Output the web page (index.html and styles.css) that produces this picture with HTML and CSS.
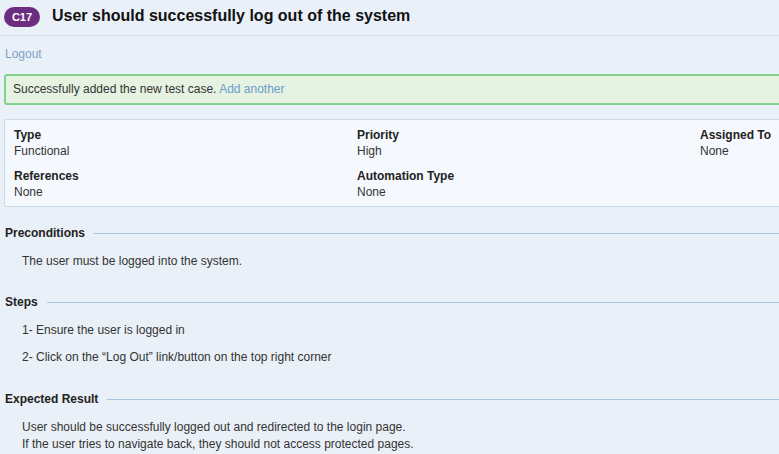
FILE: index.html
```html
<!DOCTYPE html>
<html>
<head>
<meta charset="utf-8">
<link rel="stylesheet" href="styles.css">
</head>
<body>
<div class="page">
  <header class="header">
    <span class="badge">C17</span>
    <h1 class="title">User should successfully log out of the system</h1>
  </header>
  <a class="logout" href="#">Logout</a>
  <div class="alert">Successfully added the new test case. <a href="#">Add another</a></div>
  <div class="info">
    <div class="field"><div class="label">Type</div><div class="value">Functional</div></div>
    <div class="field"><div class="label">Priority</div><div class="value">High</div></div>
    <div class="field"><div class="label">Assigned To</div><div class="value">None</div></div>
    <div class="field"><div class="label">References</div><div class="value">None</div></div>
    <div class="field"><div class="label">Automation Type</div><div class="value">None</div></div>
  </div>
  <section class="section first">
    <h2 class="sec-head"><span>Preconditions</span></h2>
    <div class="sec-body pre"><p>The user must be logged into the system.</p></div>
  </section>
  <section class="section">
    <h2 class="sec-head"><span>Steps</span></h2>
    <div class="sec-body steps">
      <p>1- Ensure the user is logged in</p>
      <p>2- Click on the “Log Out” link/button on the top right corner</p>
    </div>
  </section>
  <section class="section last">
    <h2 class="sec-head"><span>Expected Result</span></h2>
    <div class="sec-body result">
      <p>User should be successfully logged out and redirected to the login page.</p>
      <p>If the user tries to navigate back, they should not access protected pages.</p>
    </div>
  </section>
</div>
</body>
</html>
```

FILE: styles.css
```css
html, body {
  margin: 0;
  padding: 0;
  background: #eaf0f7;
  overflow: hidden;
}
body {
  font-family: "Liberation Sans", Arial, sans-serif;
  font-size: 12px;
  color: #333;
}
.page {
  width: 1060px;
}
.header {
  display: flex;
  align-items: center;
  height: 36px;
  border-bottom: 1px solid #d3dfeb;
  padding-left: 4px;
  box-sizing: border-box;
}
.badge {
  display: inline-flex;
  align-items: center;
  justify-content: center;
  width: 36px;
  height: 20px;
  border-radius: 10px;
  background: #6c2c80;
  color: #fff;
  font-weight: bold;
  font-size: 11px;
  margin-top: -2px;
}
.title {
  margin: -4px 0 0 12px;
  font-size: 16px;
  font-weight: bold;
  color: #111;
}
.logout {
  display: block;
  margin: 11px 0 0 5px;
  color: #7ba4c9;
  text-decoration: none;
  line-height: 14px;
}
.alert {
  margin: 13px 0 0 4px;
  height: 31px;
  box-sizing: border-box;
  background: #e6f2e2;
  border: 2px solid #82d18d;
  border-radius: 3px;
  padding: 6px 0 0 7px;
  line-height: 14px;
  color: #333;
}
.alert a {
  color: #6b9fc9;
  text-decoration: none;
}
.info {
  margin: 14px 0 0 4px;
  background: #f5f9fd;
  border: 1px solid #c8d9e9;
  border-radius: 2px;
  padding: 7px 9px 6px 9px;
  display: grid;
  grid-template-columns: 343px 343px 343px;
  row-gap: 9px;
}
.label {
  font-weight: bold;
  color: #222;
  line-height: 16px;
}
.value {
  line-height: 16px;
  color: #333;
}
.section {
  margin-top: 27px;
}
.section.first {
  margin-top: 19px;
}
.section.last {
  margin-top: 28px;
}
.sec-head {
  display: flex;
  align-items: center;
  margin: 0;
  padding-left: 5px;
  font-size: 12px;
  font-weight: bold;
  color: #222;
  line-height: 14px;
}
.sec-head::after {
  content: "";
  flex: 1;
  height: 1px;
  background: #a6c5de;
  margin-left: 9px;
}
.sec-body {
  padding-left: 22px;
}
.sec-body p {
  margin: 0;
  line-height: 14px;
}
.pre {
  padding-top: 14px;
}
.steps {
  padding-top: 14px;
}
.steps p + p {
  margin-top: 13px;
}
.result {
  padding-top: 13px;
}
.result p {
  line-height: 17px;
}
```
